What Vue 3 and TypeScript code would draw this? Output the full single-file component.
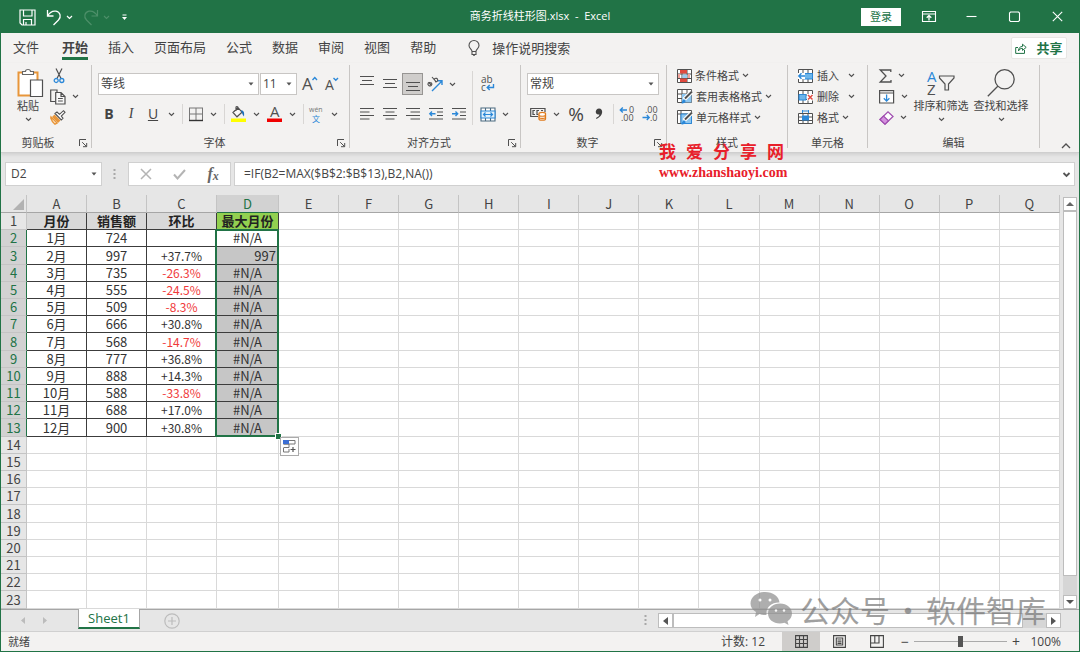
<script setup lang="ts">
import { defineComponent, h, ref } from 'vue'

type Shape = { d: string; s?: string; f?: string; w?: number }
type Glyph = { x: number; y: number; size: number; text: string; f?: string }
type IconDef = { w: number; h: number; p?: Shape[]; t?: Glyph[] }

const G = '#505050'
const B = '#2b88d8'
const R = '#e04a3f'

const gridLines = 'M.5 .5H14.5V13.5H.5ZM.5 5H14.5M.5 9.5H14.5M5 .5V13.5M10 .5V13.5'

const icons: Record<string, IconDef> = {
  chev: { w: 7, h: 5, p: [{ d: 'M1 1L3.5 3.5L6 1', s: G, w: 1.1 }] },
  chevLight: { w: 7, h: 5, p: [{ d: 'M1 1L3.5 3.5L6 1', s: '#fff', w: 1.2 }] },
  chevDim: { w: 7, h: 5, p: [{ d: 'M1 1L3.5 3.5L6 1', s: '#4d8f69', w: 1.1 }] },
  up: { w: 10, h: 6, p: [{ d: 'M1 5L5 1L9 5', s: G, w: 1.3 }] },
  tri: { w: 6, h: 4, p: [{ d: 'M.5 .5H5.5L3 3.5Z', f: '#555' }] },
  formulaDown: { w: 7, h: 5, p: [{ d: 'M.5 1L3.5 4L6.5 1', s: '#555', w: 1.8 }] },
  save: { w: 17, h: 17, p: [{ d: 'M1 1H16V16H3L1 14ZM4.5 1V7H13V1M4.5 16V10.5H12.5V16M7 16V13', s: '#fff', w: 1.2 }] },
  undo: { w: 16, h: 17, p: [{ d: 'M1.5 1V7H7.5M1.5 7C4 3 7 1.6 10 2.2C14.5 3.2 15.5 8 12.5 11L7.5 16', s: '#fff', w: 1.3 }] },
  redo: { w: 16, h: 17, p: [{ d: 'M14.5 1V7H8.5M14.5 7C12 3 9 1.6 6 2.2C1.5 3.2 .5 8 3.5 11L8.5 16', s: '#4d8f69', w: 1.2 }] },
  custom: { w: 5, h: 7, p: [{ d: 'M.5 1H4.5', s: '#fff', w: 1 }, { d: 'M0 3H5L2.5 6Z', f: '#fff' }] },
  ribbon: { w: 14, h: 11, p: [{ d: 'M.5 .5H13.5V10.5H.5ZM.5 3H13.5', s: '#fff', w: 1.1 }, { d: 'M7 9.5V4.8M4.7 6.8L7 4.5L9.3 6.8', s: '#fff', w: 1.3 }] },
  min: { w: 11, h: 11, p: [{ d: 'M.5 5.5H10.5', s: '#fff', w: 1.1 }] },
  max: { w: 11, h: 11, p: [{ d: 'M1.5 1H9.5L10.5 2V9.5L9.5 10.5H1.5L.5 9.5V2Z', s: '#fff', w: 1.1 }] },
  close: { w: 11, h: 11, p: [{ d: 'M.8 .8L10.2 10.2M10.2 .8L.8 10.2', s: '#fff', w: 1.1 }] },
  bulb: { w: 12, h: 16, p: [{ d: 'M4 11.5C4 9 1 8.5 1 5.5A5 5 0 0 1 11 5.5C11 8.5 8 9 8 11.5ZM4 11.5V14.5H8V11.5M5 15.3H7', s: G, w: 1.1 }] },
  share: { w: 12, h: 11, p: [{ d: 'M3 4.5H.7V10.4H9.5V7M3.5 8C3.5 5 5 3.5 7.5 3.4V1.2L11.2 4.4L7.5 7.4V5.4C5.5 5.4 4.2 6.2 3.5 8Z', s: '#217346' }] },
  paste: {
    w: 28, h: 30,
    p: [
      { d: 'M2.5 4.5H21.5V27.5H2.5Z', f: '#fff', s: '#e8963a', w: 2 },
      { d: 'M6.5 6.5V3.5H9.5C9.5 .8 14.5 .8 14.5 3.5H17.5V6.5Z', f: '#fff', s: '#666', w: 1.1 },
      { d: 'M14.5 12H26.5V28.5H14.5Z', f: '#fff', s: '#505050', w: 1.2 },
    ],
  },
  cut: {
    w: 12, h: 16,
    p: [
      { d: 'M3 .5L8 10.5M9 .5L4 10.5', s: G, w: 1.2 },
      { d: 'M1.2 12.5A2 2 0 1 0 5.2 12.5A2 2 0 1 0 1.2 12.5M6.8 12.5A2 2 0 1 0 10.8 12.5A2 2 0 1 0 6.8 12.5', s: B, w: 1.3 },
    ],
  },
  copy: { w: 16, h: 16, p: [{ d: 'M5.5 12.5H.7V1H7V3', s: G, w: 1.2 }, { d: 'M5.7 3.5H11L15 7.5V15H5.7ZM11 3.5V7.5H15M8 9.5H12.8M8 12H12.8', s: G, f: '#f8f8f8', w: 1.2 }] },
  brush: {
    w: 16, h: 15,
    p: [
      { d: 'M1 7L7 13L5 14.2C3 12.5 1.5 10.5 .8 8Z', f: '#fff4e2', s: '#e8963a', w: 1.4 },
      { d: 'M4.5 4.5L10.5 10.5L8 13L2 7Z', f: '#e8963a' },
      { d: 'M5 3.5L7 2L9.5 4.3L13.5 .7L15 2.3L11.3 6L13 8.3L11.3 10Z', f: '#fff', s: G, w: 1.1 },
    ],
  },
  launch: { w: 9, h: 9, p: [{ d: 'M.5 7V.5H7M3.2 3.2L7.5 7.5M7.7 4V7.7H4', s: G, w: 1 }] },
  grow: { w: 16, h: 16, t: [{ x: 0, y: 14, size: 17, text: 'A' }], p: [{ d: 'M10.5 4L12.8 1.6L15 4', s: B, w: 1.4 }] },
  shrink: { w: 14, h: 16, t: [{ x: 0, y: 14, size: 14, text: 'A' }], p: [{ d: 'M8.5 2L10.8 4.2L13 2', s: B, w: 1.4 }] },
  border: {
    w: 16, h: 15,
    p: [
      { d: 'M1 1H15M1 7H15M1.5 1V13M8 1V13M14.5 1V13', s: '#777', w: 1 },
      { d: 'M1 13.5H15', s: '#333', w: 1.4 },
    ],
  },
  fill: {
    w: 17, h: 17,
    p: [
      { d: 'M1 12.5H16V16H1Z', f: '#ffff00' },
      { d: 'M3 6.5L8 1.7L12 6.2L7 10.8ZM6 5V1.5C6 .3 8 .3 8 1.7V4', s: G, f: '#f8f8f8', w: 1.2 },
      { d: 'M11.5 4C14 5 14.5 6.5 14 10.5C12 8 12.5 7 11 5.5', f: '#1e6fb8' },
    ],
  },
  color: { w: 16, h: 17, t: [{ x: 3, y: 11, size: 15, text: 'A' }], p: [{ d: 'M0 12.5H15V16H0Z', f: '#f00000' }] },
  wen: { w: 16, h: 17, t: [{ x: 0, y: 6, size: 7, text: 'wén', f: '#777' }, { x: 3, y: 15.5, size: 8, text: '文', f: B }] },
  top: { w: 14, h: 12, p: [{ d: 'M0 1.5H14M2 5.5H12M0 9.5H14', s: G, w: 1.2 }] },
  left: { w: 14, h: 14, p: [{ d: 'M0 1.5H14M0 5H9.5M0 8.5H14M0 12H9.5', s: G, w: 1.2 }] },
  center: { w: 14, h: 14, p: [{ d: 'M0 1.5H14M2.5 5H11.5M0 8.5H14M2.5 12H11.5', s: G, w: 1.2 }] },
  right: { w: 14, h: 14, p: [{ d: 'M0 1.5H14M4.5 5H14M0 8.5H14M4.5 12H14', s: G, w: 1.2 }] },
  outdent: { w: 14, h: 14, p: [{ d: 'M0 1.5H14M8 5H14M8 8.5H14M0 12H14', s: G, w: 1.2 }, { d: 'M6.5 6.7H1M3 4.5L.8 6.7L3 9', s: B, w: 1.4 }] },
  indent: { w: 14, h: 14, p: [{ d: 'M0 1.5H14M8 5H14M8 8.5H14M0 12H14', s: G, w: 1.2 }, { d: 'M0 6.7H5.5M3.5 4.5L5.7 6.7L3.5 9', s: B, w: 1.4 }] },
  orient: { w: 16, h: 16, p: [{ d: 'M5 15L14.5 5.5M10.5 4.8H15V9', s: B, w: 1.4 }, { d: 'M4.6 9.8L1.6 6.2M4.2 9.4A1.9 1.6 45 1 1 3.6 6.9C4.6 6.6 5.6 8.4 4.2 9.4M5 1L9 5.6M7.2 3.6A1.8 1.8 0 1 1 8 5.6', s: G, w: 1.1 }] },
  wrap: { w: 14, h: 16, t: [{ x: 0, y: 7, size: 10, text: 'ab' }, { x: 0, y: 15, size: 10, text: 'c' }], p: [{ d: 'M12.5 8V11.5H6.5M8.7 9L6.2 11.5L8.7 14', s: B, w: 1.4 }] },
  merge: {
    w: 16, h: 15,
    p: [
      { d: 'M1 1H15V14H1ZM5.5 1V4M10.5 1V4M5.5 11V14M10.5 11V14', s: '#4b6a80', f: '#fff', w: 1.1 },
      { d: 'M1 4H15V11H1Z', s: B, f: '#e3f1fb', w: 1.1 },
      { d: 'M3.5 7.5H12.5M5.5 5.5L3.5 7.5L5.5 9.5M10.5 5.5L12.5 7.5L10.5 9.5', s: B, w: 1.2 },
    ],
  },
  money: {
    w: 17, h: 14,
    p: [
      { d: 'M8 9.5H.7V1.5H15V5M5 3.5H3V7.5H5M9 3.5H7V7.5H8.5M11 3.5H13', s: G, w: 1.2 },
      { d: 'M9 6.5C9 5 15.5 5 15.5 6.5V12C15.5 13.6 9 13.6 9 12Z', f: '#fff', s: '#e07b1c', w: 1.3 },
      { d: 'M9 8.5C10 9.5 14.5 9.5 15.5 8.5M9 10.6C10 11.6 14.5 11.6 15.5 10.6', s: '#e07b1c', w: 1.2 },
    ],
  },
  comma: { w: 8, h: 12, p: [{ d: 'M4 .5C8.5 .5 8.8 7.5 1.5 11L1 10C3.5 8.5 4.5 7.5 4.4 6.4C-.5 7.5 -.2 .5 4 .5Z', f: '#404040' }] },
  incDec: { w: 16, h: 16, t: [{ x: 10, y: 7, size: 9, text: '0' }, { x: 2, y: 15, size: 9, text: '.00' }], p: [{ d: 'M8 4H1.5M3.8 1.5L1.3 4L3.8 6.5', s: B, w: 1.4 }] },
  decDec: { w: 16, h: 16, t: [{ x: 3, y: 7, size: 9, text: '.00' }, { x: 8, y: 15, size: 9, text: '.0' }], p: [{ d: 'M.5 11.5H7M4.8 9L7.2 11.5L4.8 14', s: B, w: 1.4 }] },
  cond: {
    w: 15, h: 14,
    p: [
      { d: gridLines, s: G, f: '#fff' },
      { d: 'M3 1H10V4.5H3ZM3 9.5H10V13H3Z', f: R },
      { d: 'M11 5H13V9H11ZM1 5H3V9H1Z', f: '#f3a39b' },
      { d: 'M5.5 5.5H10V9H5.5Z', f: '#9dcbee' },
    ],
  },
  tableStyle: {
    w: 16, h: 15,
    p: [
      { d: gridLines, s: G, f: '#fff' },
      { d: 'M5 5H14.5V13.5H5Z', f: '#8cc6f0' },
      { d: 'M15 2.5L7 10.5', s: '#fff', w: 4 },
      { d: 'M15 2.5L8 9.5', s: G, w: 2 },
      { d: 'M4.5 14.5C5 11 7 9.5 8.5 11C9 13.5 7 14.5 4.5 14.5Z', f: B },
    ],
  },
  cellStyle: {
    w: 16, h: 15,
    p: [
      { d: 'M.5 .5H14.5V13.5H.5ZM.5 4H14.5M4 .5V13.5', s: G, f: '#fff' },
      { d: 'M4 4H14.5V13.5H4Z', f: '#8cc6f0', s: B },
      { d: 'M15 2.5L7 10.5', s: '#fff', w: 4 },
      { d: 'M15 2.5L8 9.5', s: G, w: 2 },
      { d: 'M4.5 14.5C5 11 7 9.5 8.5 11C9 13.5 7 14.5 4.5 14.5Z', f: B },
    ],
  },
  insert: { w: 16, h: 14, p: [{ d: gridLines, s: G, f: '#fff' }, { d: 'M6 4.5H14.5V10H6Z', f: '#6cb5ea', s: B }, { d: 'M0 4H7V10H0Z', f: '#fff' }, { d: 'M7 7H1M3.5 4.3L.8 7L3.5 9.7', s: B, w: 1.4 }] },
  remove: { w: 16, h: 14, p: [{ d: gridLines, s: G, f: '#fff' }, { d: 'M1 4.5H8V10H1Z', f: '#6cb5ea', s: B }, { d: 'M9 4H15.5V10.5H9Z', f: '#fff' }, { d: 'M10 5L14.5 9.5M14.5 5L10 9.5', s: R, w: 1.5 }] },
  format: { w: 16, h: 15, p: [{ d: 'M.5 3.5H14.5V13.5H.5ZM.5 7H14.5M.5 10.5H14.5M5 3.5V13.5M10 3.5V13.5', s: G, f: '#fff' }, { d: 'M4 5.5H11V10.5H4Z', f: B }, { d: 'M4.5 1H10.5M4.5 0V3M10.5 0V3', s: B }] },
  sigma: { w: 13, h: 14, p: [{ d: 'M11.8 3V1H1.2L7 7L1.2 13H12V11', s: G, w: 1.3 }] },
  fillDown: { w: 16, h: 14, p: [{ d: 'M.6 .6H14.6V13H.6ZM.6 3H14.6', s: G, f: '#fff', w: 1.2 }, { d: 'M7.6 4.5V11M4.8 8.3L7.6 11.1L10.4 8.3', s: B, w: 1.3 }] },
  eraser: { w: 15, h: 14, p: [{ d: 'M1 8.5L9 .8L14 5.5L6 13.2Z', f: '#fff', s: '#a04fb0', w: 1.3 }, { d: 'M1 8.5L4.5 5L9.5 9.8L6 13.2Z', f: '#d592df', s: '#a04fb0', w: 1.2 }] },
  sort: { w: 28, h: 27, t: [{ x: 0, y: 12, size: 15, text: 'A', f: B }, { x: 0, y: 25, size: 15, text: 'Z' }], p: [{ d: 'M12.5 6.5H27V8.5L21.5 14.5V20.5H18V14.5L12.5 8.5Z', s: G, w: 1.2 }] },
  find: { w: 28, h: 29, p: [{ d: 'M8 10.8A9.6 9.6 0 1 0 27.2 10.8A9.6 9.6 0 1 0 8 10.8M10.5 18L.8 27.8', s: G, w: 1.3 }] },
  cancel: { w: 12, h: 12, p: [{ d: 'M1 1L11 11M11 1L1 11', s: '#b4b4b4', w: 1.5 }] },
  check: { w: 13, h: 11, p: [{ d: 'M1 5.5L4.5 9.5L12 1', s: '#b4b4b4', w: 2 }] },
  dots: { w: 3, h: 11, p: [{ d: 'M.5 0H2.5V2H.5ZM.5 4H2.5V6H.5ZM.5 8H2.5V10H.5Z', f: '#a8a8a8' }] },
  corner: { w: 11, h: 11, p: [{ d: 'M11 0V11H0Z', f: '#b2b2b2' }] },
  arrL: { w: 5, h: 8, p: [{ d: 'M5 0V8L0 4Z', f: '#555' }] },
  arrR: { w: 5, h: 8, p: [{ d: 'M0 0V8L5 4Z', f: '#555' }] },
  navL: { w: 4, h: 7, p: [{ d: 'M4 0V7L0 3.5Z', f: '#bcbcbc' }] },
  navR: { w: 4, h: 7, p: [{ d: 'M0 0V7L4 3.5Z', f: '#bcbcbc' }] },
  arrU: { w: 8, h: 4, p: [{ d: 'M0 4H8L4 0Z', f: '#666' }] },
  arrD: { w: 8, h: 4, p: [{ d: 'M0 0H8L4 4Z', f: '#555' }] },
  add: { w: 16, h: 16, p: [{ d: 'M.8 8A7.2 7.2 0 1 0 15.2 8A7.2 7.2 0 1 0 .8 8M8 4V12M4 8H12', s: '#bcbcbc', w: 1.2 }] },
  quick: { w: 13, h: 13, p: [{ d: 'M.5 .5H12V4H.5ZM.5 4H6V7.5H.5M.5 8V12H6V9', s: '#777', f: '#fff' }, { d: 'M0 0H6V4H0Z', f: '#3c6fd4' }, { d: 'M7.5 9.5H12.5M10 7V12', s: '#555', w: 1.2 }] },
  viewGrid: { w: 13, h: 13, p: [{ d: 'M.6 .6H12.4V12.4H.6ZM.6 4.5H12.4M.6 8.5H12.4M4.5 .6V12.4M8.5 .6V12.4', s: '#444', w: 1.1 }] },
  viewPage: { w: 13, h: 13, p: [{ d: 'M.6 .6H12.4V12.4H.6ZM3.3 3H9.7V10H3.3ZM4.5 5H8.5M4.5 6.7H8.5M4.5 8.4H8.5', s: '#444', w: 1.1 }] },
  viewBreak: { w: 14, h: 13, p: [{ d: 'M.6 .6H13.4V12.4H.6ZM.6 8H9V.6M4.8 .6V8', s: '#444', w: 1.1 }] },
  wechat: {
    w: 44, h: 36,
    p: [
      { d: 'M15 1C23 1 29 5.5 29.5 11.5C22 11 15.5 16 16.5 24C13.5 24.2 11.5 23.8 9.5 23L5 26L6 21C2.5 18.8 .5 16 .5 12.5C.5 6 7 1 15 1Z', f: '#8d8d8d' },
      { d: 'M30 12.5C37 12.5 42 17 42 22.5C42 25.8 40.2 28.5 37.5 30.3L38.5 34L34.5 31.8C26 34.5 18 29.5 18 22.5C18 17 23 12.5 30 12.5Z', f: '#8d8d8d' },
      { d: 'M8.5 9A1.5 1.5 0 1 0 11.5 9A1.5 1.5 0 1 0 8.5 9M18.5 9A1.5 1.5 0 1 0 21.5 9A1.5 1.5 0 1 0 18.5 9M24.7 19.5A1.3 1.3 0 1 0 27.3 19.5A1.3 1.3 0 1 0 24.7 19.5M32.7 19.5A1.3 1.3 0 1 0 35.3 19.5A1.3 1.3 0 1 0 32.7 19.5', f: '#fff' },
    ],
  },
}

const Icon = defineComponent({
  props: { name: { type: String, required: true } },
  setup(props) {
    return () => {
      const i = icons[props.name]
      return h('svg', { width: i.w, height: i.h, viewBox: `0 0 ${i.w} ${i.h}`, 'aria-hidden': 'true', class: 'icon' }, [
        ...(i.p ?? []).map((s) => h('path', { d: s.d, fill: s.f ?? 'none', stroke: s.s ?? 'none', 'stroke-width': s.w ?? 1 })),
        ...(i.t ?? []).map((g) => h('text', { x: g.x, y: g.y, 'font-size': g.size, fill: g.f ?? G }, g.text)),
      ])
    }
  },
})

const tabs = ['文件', '开始', '插入', '页面布局', '公式', '数据', '审阅', '视图', '帮助']
const columns = 'ABCDEFGHIJKLMNOPQ'.split('')
const restColumns = columns.slice(4)

const headers = ['月份', '销售额', '环比', '最大月份']
const sales = [724, 997, 735, 555, 509, 666, 568, 777, 888, 588, 688, 900]
const change = ['', '+37.7%', '-26.3%', '-24.5%', '-8.3%', '+30.8%', '-14.7%', '+36.8%', '+14.3%', '-33.8%', '+17.0%', '+30.8%']
const best = Math.max(...sales)
const rows = sales.map((s, i) => ({
  n: i + 2,
  month: `${i + 1}月`,
  sales: s,
  change: change[i],
  max: s === best ? String(s) : '#N/A',
}))
const emptyRows = Array.from({ length: 10 }, (_, i) => i + 14)

const styleItems = [
  { icon: 'cond', label: '条件格式' },
  { icon: 'tableStyle', label: '套用表格格式' },
  { icon: 'cellStyle', label: '单元格样式' },
]
const cellItems = [
  { icon: 'insert', label: '插入', wide: true },
  { icon: 'remove', label: '删除', wide: true },
  { icon: 'format', label: '格式', wide: false },
]
const editItems = [
  { icon: 'sigma', label: '自动求和' },
  { icon: 'fillDown', label: '填充' },
  { icon: 'eraser', label: '清除' },
]

const formula = ref('=IF(B2=MAX($B$2:$B$13),B2,NA())')
const cellName = ref('D2')
const zoom = ref(50)
</script>

<template>
  <div class="window">
    <header class="title-bar">
      <div class="quick">
        <button aria-label="保存" class="q-save"><Icon name="save" /></button>
        <button aria-label="撤消" class="q-pair"><Icon name="undo" /><Icon name="chevLight" /></button>
        <button aria-label="恢复" class="q-pair"><Icon name="redo" /><Icon name="chevDim" /></button>
        <button aria-label="自定义快速访问工具栏"><Icon name="custom" /></button>
      </div>
      <div class="doc-title">商务折线柱形图.xlsx&nbsp; -&nbsp; Excel</div>
      <div class="win-controls">
        <button class="login">登录</button>
        <button class="wc" aria-label="功能区显示选项"><Icon name="ribbon" /></button>
        <button class="wc" aria-label="最小化"><Icon name="min" /></button>
        <button class="wc" aria-label="最大化"><Icon name="max" /></button>
        <button class="wc" aria-label="关闭"><Icon name="close" /></button>
      </div>
    </header>

    <nav class="tabs">
      <button v-for="t in tabs" :key="t" :class="['tab', { active: t === '开始' }]">{{ t }}</button>
      <button class="tell"><Icon name="bulb" /><span>操作说明搜索</span></button>
      <button class="share"><Icon name="share" /><span>共享</span></button>
    </nav>

    <section class="ribbon">
      <div class="group g-clip">
        <div class="body">
          <button class="big paste"><Icon name="paste" /><span>粘贴</span><Icon name="chev" /></button>
          <div class="stack">
            <button aria-label="剪切" class="tool"><Icon name="cut" class="cut" /></button>
            <button aria-label="复制" class="tool"><Icon name="copy" /><Icon name="chev" /></button>
            <button aria-label="格式刷" class="tool"><Icon name="brush" /></button>
          </div>
        </div>
        <div class="caption"><span>剪贴板</span><button aria-label="剪贴板设置"><Icon name="launch" /></button></div>
      </div>

      <div class="group g-font">
        <div class="body lines">
          <div class="line">
            <label class="pick font-name"><select aria-label="字体"><option>等线</option></select><Icon name="tri" /></label>
            <label class="pick font-size"><select aria-label="字号"><option>11</option></select><Icon name="tri" /></label>
            <button aria-label="增大字号" class="grow"><Icon name="grow" /></button>
            <button aria-label="减小字号" class="shrink"><Icon name="shrink" /></button>
          </div>
          <div class="line">
            <button class="letter bold">B</button>
            <button class="letter italic">I</button>
            <button class="letter under">U</button>
            <button class="drop" aria-label="下划线选项"><Icon name="chev" /></button>
            <i class="bar"></i>
            <button class="split" aria-label="边框"><Icon name="border" /><Icon name="chev" /></button>
            <i class="bar"></i>
            <button class="split" aria-label="填充颜色"><Icon name="fill" /><Icon name="chev" /></button>
            <button class="split" aria-label="字体颜色"><Icon name="color" /><Icon name="chev" /></button>
            <i class="bar"></i>
            <button class="split" aria-label="拼音"><Icon name="wen" /><Icon name="chev" /></button>
          </div>
        </div>
        <div class="caption"><span>字体</span><button aria-label="字体设置"><Icon name="launch" /></button></div>
      </div>

      <div class="group g-align">
        <div class="body">
          <div class="lines">
            <div class="line">
              <button class="cellbtn" aria-label="顶端对齐"><Icon name="top" class="v-top" /></button>
              <button class="cellbtn" aria-label="垂直居中"><Icon name="top" /></button>
              <button class="cellbtn on" aria-label="底端对齐"><Icon name="top" class="v-bottom" /></button>
              <button class="split orient" aria-label="方向"><Icon name="orient" /><Icon name="chev" /></button>
            </div>
            <div class="line">
              <button class="cellbtn" aria-label="左对齐"><Icon name="left" /></button>
              <button class="cellbtn" aria-label="居中"><Icon name="center" /></button>
              <button class="cellbtn" aria-label="右对齐"><Icon name="right" /></button>
              <button class="cellbtn" aria-label="减少缩进量"><Icon name="outdent" /></button>
              <button class="cellbtn" aria-label="增加缩进量"><Icon name="indent" /></button>
            </div>
          </div>
          <i class="tall"></i>
          <div class="lines">
            <div class="line"><button class="wrap" aria-label="自动换行"><Icon name="wrap" /></button></div>
            <div class="line"><button class="split" aria-label="合并后居中"><Icon name="merge" /><Icon name="chev" /></button></div>
          </div>
        </div>
        <div class="caption"><span>对齐方式</span><button aria-label="对齐设置"><Icon name="launch" /></button></div>
      </div>

      <div class="group g-num">
        <div class="body lines">
          <div class="line">
            <label class="pick num-format"><select aria-label="数字格式"><option>常规</option></select><Icon name="tri" /></label>
          </div>
          <div class="line num-line">
            <button class="split" aria-label="会计数字格式"><Icon name="money" /><Icon name="chev" /></button>
            <button class="percent">%</button>
            <button class="comma" aria-label="千位分隔样式"><Icon name="comma" /></button>
            <i class="bar"></i>
            <button class="dec" aria-label="增加小数位数"><Icon name="incDec" /></button>
            <button class="dec" aria-label="减少小数位数"><Icon name="decDec" /></button>
          </div>
        </div>
        <div class="caption"><span>数字</span><button aria-label="数字设置"><Icon name="launch" /></button></div>
      </div>

      <div class="group g-style">
        <div class="body stack">
          <button v-for="s in styleItems" :key="s.label" class="tool text"><Icon :name="s.icon" /><span>{{ s.label }}</span><Icon name="chev" /></button>
        </div>
        <div class="caption"><span>样式</span></div>
      </div>

      <div class="group g-cells">
        <div class="body stack">
          <button v-for="s in cellItems" :key="s.label" :class="['tool', 'text', { wide: s.wide }]"><Icon :name="s.icon" /><span>{{ s.label }}</span><Icon name="chev" /></button>
        </div>
        <div class="caption"><span>单元格</span></div>
      </div>

      <div class="group g-edit">
        <div class="body">
          <div class="stack">
            <button v-for="s in editItems" :key="s.label" class="tool" :aria-label="s.label"><Icon :name="s.icon" /><Icon name="chev" /></button>
          </div>
          <button class="big"><Icon name="sort" /><span>排序和筛选</span><Icon name="chev" /></button>
          <button class="big"><Icon name="find" /><span>查找和选择</span><Icon name="chev" /></button>
        </div>
        <div class="caption"><span>编辑</span></div>
      </div>
      <button class="collapse" aria-label="折叠功能区"><Icon name="up" /></button>
    </section>

    <section class="formula-bar">
      <label class="name-box"><input v-model="cellName" aria-label="名称框" /><Icon name="tri" /></label>
      <Icon name="dots" class="grip" />
      <div class="fx-box">
        <button aria-label="取消"><Icon name="cancel" /></button>
        <button aria-label="输入"><Icon name="check" /></button>
        <button class="fx" aria-label="插入函数">f<small>x</small></button>
      </div>
      <label class="formula"><input v-model="formula" aria-label="编辑栏" /><Icon name="formulaDown" /></label>
    </section>

    <main class="sheet">
      <table>
        <colgroup>
          <col class="c-row" /><col class="c-a" /><col class="c-a" /><col class="c-c" /><col class="c-d" />
          <col v-for="c in restColumns" :key="c" />
        </colgroup>
        <thead>
          <tr>
            <th class="corner"><Icon name="corner" /></th>
            <th v-for="c in columns" :key="c" scope="col" :class="{ picked: c === 'D' }">{{ c }}</th>
          </tr>
        </thead>
        <tbody>
          <tr>
            <th scope="row">1</th>
            <td v-for="(t, i) in headers" :key="t" :class="['data', 'head', { lime: i === 3 }]">{{ t }}</td>
            <td v-for="c in restColumns" :key="c"></td>
          </tr>
          <tr v-for="(r, i) in rows" :key="r.n">
            <th scope="row" class="picked">{{ r.n }}</th>
            <td class="data">{{ r.month }}</td>
            <td class="data">{{ r.sales }}</td>
            <td :class="['data', 'pct', { neg: r.change.startsWith('-') }]">{{ r.change }}</td>
            <td :class="['data', 'sel', { first: i === 0, last: i === rows.length - 1, num: r.max !== '#N/A' }]">
              {{ r.max }}
              <template v-if="i === rows.length - 1">
                <i class="handle"></i>
                <button class="quick-fill" aria-label="自动填充选项"><Icon name="quick" /></button>
              </template>
            </td>
            <td v-for="c in restColumns" :key="c"></td>
          </tr>
          <tr v-for="n in emptyRows" :key="n">
            <th scope="row">{{ n }}</th>
            <td v-for="c in columns" :key="c"></td>
          </tr>
        </tbody>
      </table>
      <div class="vscroll">
        <button aria-label="向上滚动"><Icon name="arrU" /></button>
        <div class="vthumb"></div>
        <button aria-label="向下滚动"><Icon name="arrD" /></button>
      </div>
    </main>

    <div class="sheet-tabs">
      <button class="nav" aria-label="上一个工作表"><Icon name="navL" /></button>
      <button class="nav" aria-label="下一个工作表"><Icon name="navR" /></button>
      <button class="sheet-tab">Sheet1</button>
      <button class="add" aria-label="新工作表"><Icon name="add" /></button>
      <Icon name="dots" class="split-grip" />
      <div class="hscroll">
        <button aria-label="向左滚动"><Icon name="arrL" /></button>
        <div class="hthumb"></div>
        <button aria-label="向右滚动"><Icon name="arrR" /></button>
      </div>
    </div>

    <footer class="status">
      <span>就绪</span>
      <span class="count">计数: 12</span>
      <button class="view on" aria-label="普通"><Icon name="viewGrid" /></button>
      <button class="view" aria-label="页面布局"><Icon name="viewPage" /></button>
      <button class="view" aria-label="分页预览"><Icon name="viewBreak" /></button>
      <button class="zoom-btn" aria-label="缩小">−</button>
      <input v-model="zoom" type="range" min="0" max="100" aria-label="缩放" />
      <button class="zoom-btn" aria-label="放大">+</button>
      <span class="zoom">100%</span>
    </footer>

    <div class="mark-red">
      <div class="mark-cn"><span v-for="c in '我爱分享网'" :key="c">{{ c }}</span></div>
      <div class="mark-url">www.zhanshaoyi.com</div>
    </div>
    <div class="mark-gray">
      <Icon name="wechat" /><span class="mark-name">公众号</span><span class="mark-dot">·</span><span>软件智库</span>
    </div>
  </div>
</template>

<style>
body {
  margin: 0;
}
</style>

<style scoped>
.window {
  position: relative;
  box-sizing: border-box;
  min-height: 100vh;
  display: flex;
  flex-direction: column;
  border: 1px solid #217346;
  border-top: 0;
  background: #e6e6e6;
  color: #444;
  font: 11px/16px "Open Sans", "Noto Sans CJK SC", sans-serif;
  overflow: hidden;
}
.window :deep(*) {
  box-sizing: border-box;
}
button,
input,
select {
  font: inherit;
  color: inherit;
  border: 0;
  padding: 0;
  margin: 0;
  background: none;
}
button {
  display: flex;
  align-items: center;
  justify-content: center;
  white-space: nowrap;
}
.icon {
  display: block;
  flex: none;
  overflow: visible;
}

.title-bar {
  height: 33px;
  flex: none;
  display: grid;
  grid-template-columns: 1fr auto 1fr;
  align-items: center;
  background: #217346;
  color: #fff;
}
.quick {
  display: flex;
  align-items: center;
  padding: 2px 0 0 18px;
}
.q-save {
  margin-right: 10px;
}
.q-pair {
  gap: 4px;
  margin-right: 10px;
}
.q-pair + .q-pair {
  margin-right: 12px;
}
.doc-title {
  padding-bottom: 2px;
  white-space: nowrap;
}
.win-controls {
  display: flex;
  align-items: center;
  justify-content: flex-end;
}
.login {
  width: 40px;
  height: 18px;
  margin-right: 6px;
  background: #fff;
  color: #217346;
}
.wc {
  width: 43px;
  height: 33px;
}

.tabs {
  height: 30px;
  flex: none;
  display: flex;
  align-items: flex-start;
  padding: 4px 12px 0;
  gap: 20px;
  background: #f3f2f1;
  font-size: 13px;
}
.tab {
  height: 23px;
  border-bottom: 3px solid transparent;
}
.tab:first-child {
  margin-right: 3px;
}
.tab.active {
  font-weight: 700;
  border-color: #217346;
}
.tell {
  height: 21px;
  gap: 12px;
  margin-left: 12px;
}
.share {
  width: 56px;
  height: 22px;
  gap: 9px;
  margin-left: auto;
  background: #fff;
  border: 1px solid #e8e6e4;
  border-radius: 2px;
  color: #217346;
  font-weight: 700;
}

.ribbon {
  position: relative;
  height: 90px;
  flex: none;
  display: flex;
  background: #f3f2f1;
  border-bottom: 1px solid #cfcfcf;
  box-shadow: 0 2px 3px #d2d2d2;
}
.group {
  flex: none;
  display: flex;
  flex-direction: column;
  margin: 2px 0 4px;
  border-right: 1px solid #c8c6c4;
}
.g-clip { width: 91px; }
.g-font { width: 258px; }
.g-align { width: 171px; }
.g-num { width: 146px; }
.g-style { width: 121px; }
.g-cells { width: 80px; }
.g-edit { width: 172px; }
.body {
  flex: 1;
  display: flex;
}
.caption {
  height: 10px;
  display: flex;
  align-items: center;
  padding-right: 3px;
}
.caption span {
  flex: 1;
  text-align: center;
}
.g-clip .caption span {
  padding-right: 4px;
}
.g-style .caption,
.g-cells .caption,
.g-edit .caption {
  padding-right: 0;
}
.lines {
  display: flex;
  flex-direction: column;
  gap: 8px;
  padding: 8px 0 0 6px;
}
.line {
  height: 22px;
  display: flex;
  align-items: center;
}
.stack {
  display: flex;
  flex-direction: column;
}
.tool {
  height: 21px;
  justify-content: flex-start;
  gap: 6px;
}
.tool.text {
  gap: 3px;
}
.tool.wide span {
  margin-right: 6px;
}
.cut {
  margin-left: 3px;
}
.big {
  height: 60px;
  flex-direction: column;
  justify-content: flex-start;
  padding-top: 3px;
}
.big span {
  margin-bottom: 3px;
}
.big :deep(svg:first-child) {
  height: 30px;
}
.paste {
  width: 41px;
  margin: 0 0 0 8px;
}
.paste span,
.paste :deep(svg:last-child) {
  margin-right: 3px;
}
.g-edit .big {
  width: 60px;
}
.g-edit .body .stack {
  width: 43px;
  padding-left: 11px;
}
.g-style .stack,
.g-cells .stack {
  padding-left: 10px;
}
.pick {
  position: relative;
  display: flex;
  align-items: center;
  height: 22px;
  background: #fff;
  border: 1px solid #c8c6c4;
  font-size: 12px;
}
.pick select {
  width: 100%;
  height: 20px;
  padding-left: 2px;
  appearance: none;
}
.pick .icon,
.name-box .icon,
.formula .icon {
  position: absolute;
  right: 4px;
  pointer-events: none;
}
.font-name {
  width: 161px;
  margin-right: 1px;
}
.font-size {
  width: 37px;
}
.num-format {
  width: 132px;
}
.grow {
  margin-left: 5px;
}
.shrink {
  margin-left: 7px;
}
.letter {
  width: 22px;
  height: 22px;
  font-size: 14px;
}
.bold {
  font-weight: 700;
}
.italic {
  font-family: "Liberation Serif", serif;
  font-style: italic;
}
.under {
  text-decoration: underline;
}
.drop {
  width: 14px;
  height: 22px;
}
.bar {
  width: 1px;
  height: 20px;
  margin: 0 5px;
  background: #d8d6d4;
}
.drop + .bar {
  margin-left: 4px;
}
.split {
  height: 22px;
  gap: 6px;
}
.split + .split {
  margin-left: 7px;
}
.split + .bar {
  margin-left: 7px;
}
.cellbtn {
  width: 21px;
  height: 22px;
  margin-right: 2px;
}
.cellbtn.on {
  background: #cfcdcb;
  border: 1px solid #979593;
}
.v-top {
  margin-bottom: 6px;
}
.v-bottom {
  margin-top: 6px;
}
.orient {
  margin-left: 2px;
}
.tall {
  width: 1px;
  height: 54px;
  margin: 6px 1px 0 1px;
  background: #d8d6d4;
}
.wrap {
  padding-left: 1px;
}
.num-line {
  padding-left: 3px;
}
.percent {
  width: 32px;
  font-size: 19px;
}
.comma {
  width: 10px;
  margin: 0 4px 0 2px;
}
.dec {
  margin-right: 7px;
}
.collapse {
  margin: auto 8px 1px auto;
  height: 10px;
}

.formula-bar {
  height: 42px;
  flex: none;
  display: flex;
  padding: 9px 4px;
  font-size: 12px;
}
.name-box,
.fx-box,
.formula {
  position: relative;
  display: flex;
  align-items: center;
  height: 24px;
  background: #fff;
  border: 1px solid #d0d0d0;
}
.name-box {
  width: 97px;
}
.name-box input,
.formula input {
  width: 100%;
  padding-left: 5px;
}
.formula input {
  padding-left: 9px;
}
.grip {
  margin: 7px 12px 0 11px;
}
.fx-box {
  width: 103px;
  margin-right: 3px;
}
.fx-box button {
  flex: 1;
}
.fx {
  color: #666;
  font: italic 700 16px/20px "Liberation Serif", serif;
}
.fx small {
  font-size: 12px;
  margin-top: 3px;
}
.formula {
  flex: 1;
}

.sheet {
  flex: 1;
  display: grid;
  grid-template-columns: 1fr 19px;
}
table {
  width: 100%;
  height: 100%;
  table-layout: fixed;
  border-collapse: separate;
  border-spacing: 0;
  background: #fff;
  color: #333;
  font: 13px/16px "Noto Sans CJK SC", sans-serif;
}
.c-row { width: 26px; }
.c-a { width: 60px; }
.c-c { width: 70px; }
.c-d { width: 62px; }
th,
td {
  height: 17px;
  padding: 0;
  border: solid #d9d9d9;
  border-width: 0 1px 1px 0;
  text-align: center;
  vertical-align: bottom;
  font-weight: 400;
  white-space: nowrap;
}
thead th {
  height: 18px;
  border-bottom-color: #a6a6a6;
}
th {
  background: #e6e6e6;
  border-color: #c4c4c4;
  color: #444;
}
th.corner :deep(svg) {
  margin: 0 2px 2px auto;
}
th.picked {
  background: #d2d2d2;
  color: #217346;
}
thead th.picked {
  border-bottom-color: #217346;
}
tbody th.picked {
  border-right-color: #217346;
}
td.data {
  border-color: #3c3c3c;
}
td.head {
  font-weight: 700;
  background: #d9d9d9;
  color: #222;
}
td.lime {
  background: #92d050;
}
td.pct {
  font-size: 12px;
}
td.neg {
  color: #f03a3a;
}
td.sel {
  position: relative;
  background: #c6c6c6;
}
td.first {
  background: #fff;
}
td.num {
  text-align: right;
  padding-right: 2px;
}
td.sel::before {
  content: "";
  position: absolute;
  inset: -1px -1px -1px -2px;
  border: solid #217346;
  border-width: 0 2px;
  pointer-events: none;
}
td.first::before {
  border-top-width: 2px;
}
td.last::before {
  border-bottom-width: 2px;
}
.handle {
  position: absolute;
  right: -3px;
  bottom: -3px;
  width: 5px;
  height: 5px;
  background: #217346;
  outline: 1px solid #fff;
}
.quick-fill {
  position: absolute;
  z-index: 1;
  left: 63px;
  top: 18px;
  width: 19px;
  height: 19px;
  background: #fff;
  border: 1px solid #ababab;
}
.vscroll {
  display: flex;
  flex-direction: column;
  margin: 2px 2px 0 3px;
  background: #d6d6d6;
}
.vscroll button {
  height: 14px;
  background: #fff;
  border: 1px solid #bdbdbd;
}
.vthumb {
  flex: 1;
  margin-bottom: 19px;
  background: #fff;
  border: 1px solid #bdbdbd;
}

.sheet-tabs {
  height: 22px;
  flex: none;
  display: flex;
  align-items: center;
  padding: 0 18px 0 11px;
  border-top: 1px solid #a6a6a6;
}
.nav {
  width: 22px;
}
.sheet-tab {
  align-self: flex-start;
  width: 62px;
  height: 20px;
  margin: -1px 24px 0 22px;
  background: #fff;
  color: #217346;
  font-size: 13px;
  border: 1px solid #a6a6a6;
  border-top: 0;
  border-bottom: 2px solid #217346;
}
.split-grip {
  margin: 0 11px 0 auto;
}
.hscroll {
  width: 403px;
  height: 15px;
  display: flex;
  background: #d6d6d6;
}
.hscroll button {
  width: 15px;
  background: #fff;
  border: 1px solid #bdbdbd;
}
.hthumb {
  flex: 1;
  margin-right: 23px;
  background: #fff;
  border: 1px solid #bdbdbd;
}

.status {
  height: 20px;
  flex: none;
  display: flex;
  align-items: center;
  padding: 0 18px 0 7px;
  background: #f3f2f1;
  border-top: 1px solid #d0d0d0;
}
.count,
.zoom {
  font-size: 12px;
}
.count {
  margin: 0 17px 0 auto;
}
.view {
  width: 38px;
  height: 19px;
}
.view.on {
  background: #cfcdcb;
}
.zoom-btn {
  width: 18px;
  font-size: 14px;
}
.status input {
  width: 93px;
  height: 12px;
  appearance: none;
  background: linear-gradient(#aaa, #aaa) center / 100% 1px no-repeat;
}
.status input::-webkit-slider-thumb {
  appearance: none;
  width: 5px;
  height: 11px;
  background: #555;
}
.zoom {
  width: 36px;
  text-align: right;
}

.mark-red {
  position: absolute;
  left: 658px;
  top: 141px;
  color: #e8202a;
  pointer-events: none;
}
.mark-cn {
  display: flex;
  gap: 10px;
  font: 700 17px/20px "Noto Sans CJK SC", sans-serif;
}
.mark-url {
  font: 700 14px/24px "Liberation Serif", serif;
}
.mark-gray {
  position: absolute;
  right: 33px;
  bottom: 22px;
  display: flex;
  align-items: center;
  color: #777;
  font: 400 30px/40px "Noto Sans CJK SC", sans-serif;
  opacity: 0.7;
  pointer-events: none;
}
.mark-name {
  margin-left: 6px;
}
.mark-dot {
  width: 36px;
  text-align: center;
}
</style>
